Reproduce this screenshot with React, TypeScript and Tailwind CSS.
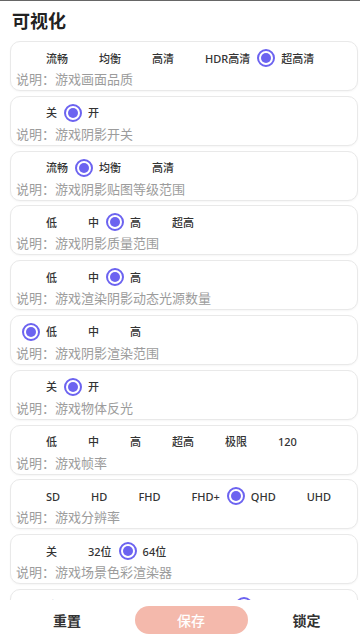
import React from "react";

type Setting = { options: string[]; selected: number; desc: string };

const settings: Setting[] = [
  { options: ["流畅", "均衡", "高清", "HDR高清", "超高清"], selected: 4, desc: "游戏画面品质" },
  { options: ["关", "开"], selected: 1, desc: "游戏阴影开关" },
  { options: ["流畅", "均衡", "高清"], selected: 1, desc: "游戏阴影贴图等级范围" },
  { options: ["低", "中", "高", "超高"], selected: 2, desc: "游戏阴影质量范围" },
  { options: ["低", "中", "高"], selected: 2, desc: "游戏渲染阴影动态光源数量" },
  { options: ["低", "中", "高"], selected: 0, desc: "游戏阴影渲染范围" },
  { options: ["关", "开"], selected: 1, desc: "游戏物体反光" },
  { options: ["低", "中", "高", "超高", "极限", "120"], selected: -1, desc: "游戏帧率" },
  { options: ["SD", "HD", "FHD", "FHD+", "QHD", "UHD"], selected: 4, desc: "游戏分辨率" },
  { options: ["关", "32位", "64位"], selected: 2, desc: "游戏场景色彩渲染器" },
  { options: ["流畅", "均衡", "高清", "HDR", "超高清"], selected: 4, desc: "游戏抗锯齿" },
];

function Radio({ on }: { on: boolean }) {
  return (
    <span
      className={`flex h-[18px] w-[18px] shrink-0 items-center justify-center rounded-full ${
        on ? "border-2 border-[#6c63f0]" : ""
      }`}
    >
      {on && <span className="h-[10px] w-[10px] rounded-full bg-[#6c63f0]" />}
    </span>
  );
}

function SettingCard({ s }: { s: Setting }) {
  return (
    <div className="ml-[10px] mr-[2px] h-[50px] rounded-[10px] border border-[#e9e9e9] bg-white px-[5px] pt-[7px] shadow-[0_1px_2px_rgba(0,0,0,0.04)]">
      <div className="flex h-[18px] items-center gap-[7px] pl-[6px]">
        {s.options.map((o, i) => (
          <div key={o} className="flex items-center gap-[6px]">
            <Radio on={i === s.selected} />
            <span className="text-[11px] font-medium leading-none text-[#333]">{o}</span>
          </div>
        ))}
      </div>
      <div className="mt-[4px] text-[13px] leading-[16px] text-[#9c9c9c]">说明：{s.desc}</div>
    </div>
  );
}

export default function App() {
  return (
    <div
      className="min-h-[640px] bg-white pb-[60px]"
      style={{ fontFamily: '"Noto Sans", "Noto Sans CJK SC", sans-serif' }}
    >
      <div className="h-px bg-[#666]" />
      <div className="flex h-[40px] items-center pl-[12px]">
        <h1 className="text-[18px] font-bold leading-none text-[#222]">可视化</h1>
      </div>
      <div className="flex flex-col gap-[4.8px]">
        {settings.map((s, i) => (
          <SettingCard key={i} s={s} />
        ))}
      </div>

      {/* bottom action bar */}
      <div className="fixed inset-x-0 bottom-0 z-10 grid h-[40px] grid-cols-[124px_124px_1fr] items-center bg-white pl-[5px]">
        <button className="text-center text-[14px] font-bold text-[#333]">重置</button>
        <div className="flex justify-center">
          <button className="h-[28px] w-[113px] rounded-full bg-[#f4b9ac] text-[14px] font-medium text-white">
            保存
          </button>
        </div>
        <button className="text-center text-[14px] font-bold text-[#333]">锁定</button>
      </div>
    </div>
  );
}
